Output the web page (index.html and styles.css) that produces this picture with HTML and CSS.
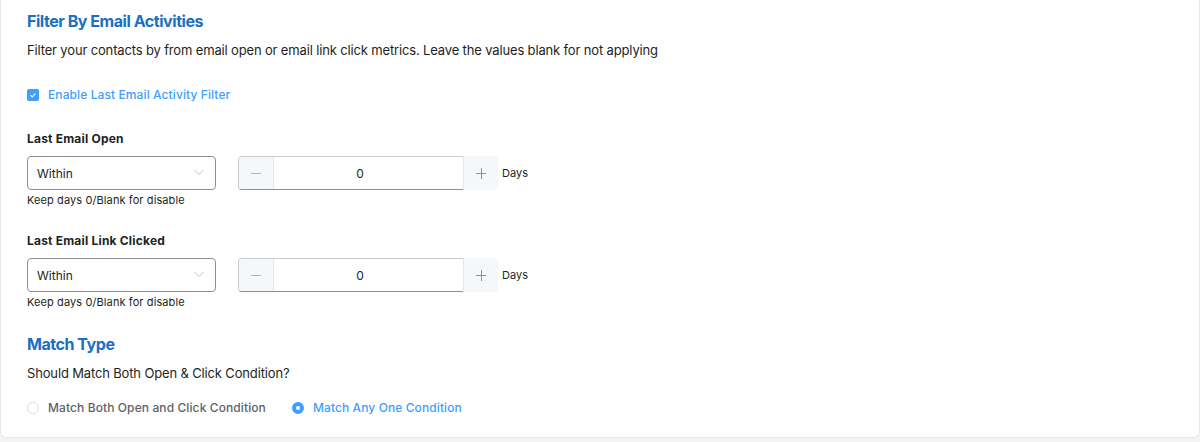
FILE: index.html
```html
<!DOCTYPE html>
<html lang="en">
<head>
    <meta charset="UTF-8">
    <meta name="viewport" content="width=device-width, initial-scale=1.0">
    <link rel="stylesheet" href="styles.css">
    <title>Filter By Email Activities</title>
</head>
<body>
    <div class="card">
        <h3 class="section-title">Filter By Email Activities</h3>
        <p class="section-desc">Filter your contacts by from email open or email link click metrics. Leave the values blank for not applying</p>

        <label class="check is-checked">
            <span class="check-box">
                <svg viewBox="0 0 12 12" width="12" height="12"><path d="M3.4 6.2 L5.2 8 L8.6 4.3" fill="none" stroke="#fff" stroke-width="1.1"/></svg>
            </span>
            <span class="check-label">Enable Last Email Activity Filter</span>
        </label>

        <div class="form-item">
            <div class="item-label">Last Email Open</div>
            <div class="item-row">
                <div class="select">
                    <span>Within</span>
                    <svg class="chevron" viewBox="0 0 14 14" width="14" height="14"><path d="M2.5 5 L7 9.5 L11.5 5" fill="none" stroke="#c0c4cc" stroke-width="1"/></svg>
                </div>
                <div class="num">
                    <span class="num-btn minus"><svg viewBox="0 0 12 12" width="12" height="12"><path d="M1 6.5 H11" stroke="#b0b3b9" stroke-width="1"/></svg></span>
                    <input class="num-input" value="0" readonly>
                    <span class="num-btn plus"><svg viewBox="0 0 12 12" width="12" height="12"><path d="M1 6.5 H11 M6.5 1 V12" stroke="#8f9299" stroke-width="1"/></svg></span>
                </div>
                <span class="unit">Days</span>
            </div>
            <div class="help">Keep days 0/Blank for disable</div>
        </div>

        <div class="form-item">
            <div class="item-label">Last Email Link Clicked</div>
            <div class="item-row">
                <div class="select">
                    <span>Within</span>
                    <svg class="chevron" viewBox="0 0 14 14" width="14" height="14"><path d="M2.5 5 L7 9.5 L11.5 5" fill="none" stroke="#c0c4cc" stroke-width="1"/></svg>
                </div>
                <div class="num">
                    <span class="num-btn minus"><svg viewBox="0 0 12 12" width="12" height="12"><path d="M1 6.5 H11" stroke="#b0b3b9" stroke-width="1"/></svg></span>
                    <input class="num-input" value="0" readonly>
                    <span class="num-btn plus"><svg viewBox="0 0 12 12" width="12" height="12"><path d="M1 6.5 H11 M6.5 1 V12" stroke="#8f9299" stroke-width="1"/></svg></span>
                </div>
                <span class="unit">Days</span>
            </div>
            <div class="help">Keep days 0/Blank for disable</div>
        </div>

        <h3 class="section-title match-title">Match Type</h3>
        <p class="section-desc">Should Match Both Open &amp; Click Condition?</p>

        <div class="radios">
            <label class="radio">
                <span class="radio-dot"></span>
                <span class="radio-label">Match Both Open and Click Condition</span>
            </label>
            <label class="radio is-checked">
                <span class="radio-dot"></span>
                <span class="radio-label">Match Any One Condition</span>
            </label>
        </div>
    </div>
</body>
</html>
```

FILE: styles.css
```css
body{
    margin: 0;
    padding: 0;
    background-color: #f3f4f6;
    font-family: Inter, "Noto Sans", sans-serif;
    color: #1e1f21;
}

.card{
    background-color: white;
    border: 1px solid #e6e8eb;
    border-top: none;
    border-radius: 0 0 6px 6px;
    height: 438px;
    box-sizing: border-box;
    padding: 11px 26px 0;
}

.section-title{
    margin: 0;
    font-size: 16px;
    font-weight: 700;
    line-height: 20px;
    color: #1b6fc1;
    letter-spacing: -0.45px;
}

.section-desc{
    margin: 11px 0 0;
    font-size: 13px;
    line-height: 16px;
    letter-spacing: -0.15px;
}

.check{
    display: flex;
    align-items: center;
    gap: 9px;
    margin-top: 29px;
    cursor: pointer;
}

.check-box{
    width: 12px;
    height: 12px;
    border-radius: 2px;
    background-color: #409eff;
    display: flex;
}

.check-label{
    font-size: 12px;
    font-weight: 500;
    color: #409eff;
    letter-spacing: 0.1px;
}

.form-item{
    margin-top: 29px;
}

.form-item + .form-item{
    margin-top: 26px;
}

.item-label{
    font-size: 12px;
    font-weight: 700;
    line-height: 16px;
    letter-spacing: 0.2px;
}

.item-row{
    display: flex;
    align-items: center;
    margin-top: 9px;
}

.select{
    width: 189px;
    height: 34px;
    box-sizing: border-box;
    border: 1px solid #8c8f94;
    border-radius: 4px;
    display: flex;
    align-items: center;
    justify-content: space-between;
    padding: 0 9px 0 9px;
    font-size: 12px;
}

.chevron{
    margin-top: -2px;
}

.num{
    display: flex;
    width: 242px;
    height: 34px;
    box-sizing: border-box;
    margin-left: 22px;
    border: 1px solid #c9cbcf;
    border-bottom-color: #8c8f94;
    border-radius: 4px;
}

.num-btn{
    width: 34px;
    flex-shrink: 0;
    display: flex;
    align-items: center;
    justify-content: center;
    background-color: #f5f7fa;
}

.minus{
    border-right: 1px solid #e4e7ed;
    border-radius: 3px 0 0 3px;
}

.plus{
    border-left: 1px solid #e4e7ed;
    border-radius: 0 4px 4px 0;
    margin-top: -1px;
    margin-bottom: -1px;
}

.num-input{
    width: 189px;
    flex-shrink: 0;
    box-sizing: border-box;
    border: none;
    outline: none;
    padding: 0 17px 0 0;
    text-align: center;
    font-family: inherit;
    font-size: 12px;
    color: #1e1f21;
    background: white;
}

.unit{
    margin-left: 22px;
    font-size: 11px;
}

.help{
    margin-top: 3px;
    font-size: 11px;
    line-height: 14px;
    letter-spacing: 0.1px;
}

.match-title{
    margin-top: 25px;
}

.radios{
    display: flex;
    gap: 26px;
    margin-top: 19px;
}

.radio{
    display: flex;
    align-items: center;
    gap: 9px;
    cursor: pointer;
}

.radio-dot{
    width: 12px;
    height: 12px;
    box-sizing: border-box;
    border: 1px solid #dcdfe6;
    border-radius: 50%;
    background-color: white;
}

.radio-label{
    font-size: 12px;
    font-weight: 500;
    color: #606266;
    letter-spacing: 0.1px;
}

.radio.is-checked .radio-dot{
    border: 4px solid #409eff;
}

.radio.is-checked .radio-label{
    color: #409eff;
}
```
